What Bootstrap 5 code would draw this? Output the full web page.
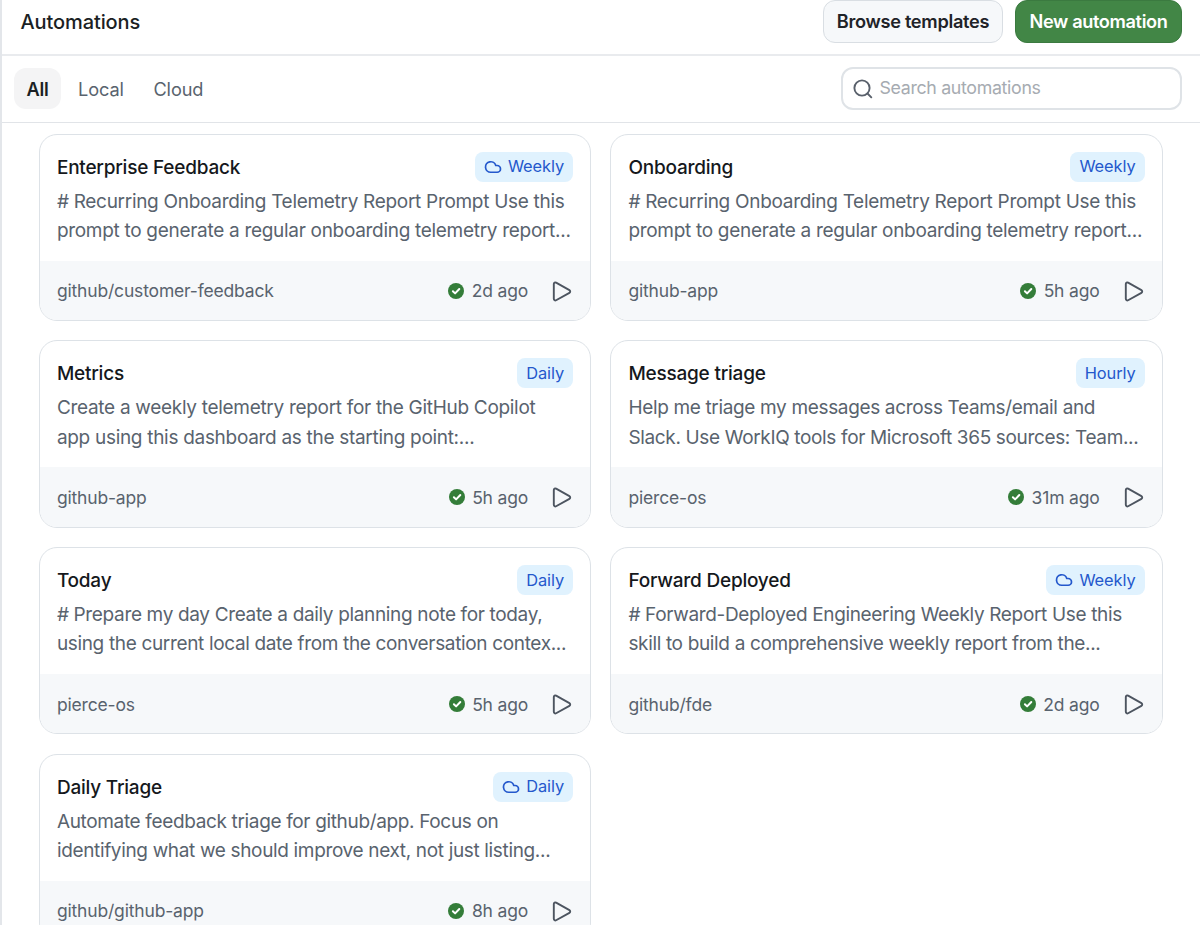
<!DOCTYPE html>
<html lang="en">
<head>
<meta charset="utf-8">
<meta name="viewport" content="width=device-width, initial-scale=1">
<title>Automations</title>
<link href="https://cdn.jsdelivr.net/npm/bootstrap@5.3.0/dist/css/bootstrap.min.css" rel="stylesheet">
<style>
  body { font-family: Inter, "Liberation Sans", sans-serif; font-size: 19px; color: #1b1f24; background: #fff; }
  .app-shell { height: 925px; border-left: 2px solid #e3e6ea; overflow: hidden; }
  .top-bar { height: 56px; padding: 0 18px 11px 18.5px; border-bottom: 2px solid #e9ebee; }
  .top-bar h1 { font-size: 20px; font-weight: 500; letter-spacing: -.1px; line-height: 30px; }
  .top-bar .btn { height: 43px; padding: 0; font-size: 18.2px; font-weight: 600; border-radius: 12px; letter-spacing: -.3px; line-height: 39px; white-space: nowrap; }
  .top-bar .btn-browse { width: 180px; background: #f6f8fa; border: 1.5px solid #d9dee3; color: #1f2328; }
  .top-bar .btn-create { width: 167px; margin-left: 12px; background: #428646; border: 1px solid #3b7a40; color: #fff; letter-spacing: -.37px; }
  .filter-bar { height: 67px; padding: 0 18px 1px 12px; border-bottom: 1px solid #e1e4e8; }
  .filter-bar .nav { gap: 4px; }
  .filter-bar .nav-link { height: 41px; padding: 0 12.8px; line-height: 42px; color: #59636e; border-radius: 12px; font-size: 18.2px; letter-spacing: -.1px; }
  .filter-bar .nav-link.active { padding: 0 12.5px; background: #f4f4f5; color: #1b1f24; font-weight: 600; letter-spacing: -.2px; }
  .search-box { width: 341px; height: 43px; border: 2px solid #dfe3e7; border-radius: 12px; padding-left: 9.5px; gap: 7px; color: #59606b; }
  .search-box input { font-size: 17.8px; letter-spacing: -.33px; outline: 0; }
  .search-box input::placeholder { color: #a6abb1; opacity: 1; }
  .card-grid { display: grid; grid-template-columns: 552.5px 552.5px; gap: 19.2px 19px; padding: 10.5px 0 0 36.6px; }
  .task-card { height: 187.5px; border: 1.5px solid #dde2e7; border-radius: 18px; overflow: hidden; }
  .task-card .card-body { padding: 17px 17px 0 17.3px; }
  .task-title { font-size: 19px; font-weight: 500; line-height: 32px; height: 30px; letter-spacing: -.22px; color: #15181c; }
  .task-tag { height: 30px; border-radius: 8px; background: #e0f2fe; color: #2458cc; font-size: 16.4px; letter-spacing: -.08px; padding: 0 9px; gap: 6px; }
  .task-text { font-size: 19px; line-height: 29.4px; letter-spacing: -.3px; color: #59636e; white-space: nowrap; margin: 5px 0 0; }
  .task-text.snug { letter-spacing: -.345px; }
  .task-card .card-footer { height: 59.5px; background: #f6f8fa; border: 0; padding: 2px 17.5px 0 17.3px; color: #59636e; font-size: 17.5px; letter-spacing: -.17px; }
  .i-ok { color: #347d39; margin-right: 7.5px; margin-top: -1px; }
  .run-btn { border: 0; background: none; padding: 0; margin-left: 24px; color: #4d5560; width: 20.5px; height: 22px; display: flex; align-items: center; }
</style>
</head>
<body>
<svg width="0" height="0" class="d-none">
  <symbol id="i-cloud" viewBox="0 0 24 24"><path d="M17.5 19H9a7 7 0 1 1 6.71-9h1.79a4.5 4.5 0 1 1 0 9Z" fill="none" stroke="currentColor" stroke-width="2.3" stroke-linejoin="round"/></symbol>
  <symbol id="i-check" viewBox="0 0 16 16"><circle cx="8" cy="8" r="8" fill="currentColor"/><path d="M4.9 8.2l2.2 2.2 4.2-4.4" fill="none" stroke="#fff" stroke-width="2" stroke-linecap="round" stroke-linejoin="round"/></symbol>
  <symbol id="i-play" viewBox="0 0 21 22"><path d="M1.9 3.2c0-1.3 1.3-2.1 2.4-1.5l14 7.8c1.1.6 1.1 2.3 0 2.9l-14 7.8c-1.1.6-2.4-.2-2.4-1.5z" fill="none" stroke="currentColor" stroke-width="2" stroke-linejoin="round"/></symbol>
</svg>
<div class="app-shell">
  <header class="top-bar d-flex align-items-center">
    <h1 class="m-0 me-auto">Automations</h1>
    <button type="button" class="btn btn-browse">Browse templates</button>
    <button type="button" class="btn btn-create">New automation</button>
  </header>
  <div class="filter-bar d-flex align-items-center">
    <nav class="nav me-auto">
      <a class="nav-link active" href="#">All</a>
      <a class="nav-link" href="#">Local</a>
      <a class="nav-link" href="#">Cloud</a>
    </nav>
    <label class="search-box d-flex align-items-center">
      <svg width="20" height="20" viewBox="0 0 20 20" fill="none" stroke="currentColor" stroke-width="1.9" stroke-linecap="round"><circle cx="9" cy="9" r="7.6"/><path d="M14.5 14.5l3.8 3.8"/></svg>
      <input type="text" class="border-0 p-0 bg-transparent flex-grow-1" placeholder="Search automations">
    </label>
  </div>
  <main class="card-grid">
    <article class="card task-card">
      <div class="card-body">
        <div class="d-flex justify-content-between"><h2 class="task-title m-0">Enterprise Feedback</h2><span class="task-tag d-flex align-items-center"><svg width="18" height="18"><use href="#i-cloud"/></svg>Weekly</span></div>
        <p class="task-text"># Recurring Onboarding Telemetry Report Prompt Use this<br>prompt to generate a regular onboarding telemetry report...</p>
      </div>
      <div class="card-footer d-flex align-items-center"><span class="me-auto">github/customer-feedback</span><svg class="i-ok" width="16" height="16"><use href="#i-check"/></svg><span>2d ago</span><button class="run-btn" aria-label="Run"><svg width="20" height="21"><use href="#i-play"/></svg></button></div>
    </article>
    <article class="card task-card">
      <div class="card-body">
        <div class="d-flex justify-content-between"><h2 class="task-title m-0">Onboarding</h2><span class="task-tag d-flex align-items-center">Weekly</span></div>
        <p class="task-text"># Recurring Onboarding Telemetry Report Prompt Use this<br>prompt to generate a regular onboarding telemetry report...</p>
      </div>
      <div class="card-footer d-flex align-items-center"><span class="me-auto">github-app</span><svg class="i-ok" width="16" height="16"><use href="#i-check"/></svg><span>5h ago</span><button class="run-btn" aria-label="Run"><svg width="20" height="21"><use href="#i-play"/></svg></button></div>
    </article>
    <article class="card task-card">
      <div class="card-body">
        <div class="d-flex justify-content-between"><h2 class="task-title m-0">Metrics</h2><span class="task-tag d-flex align-items-center">Daily</span></div>
        <p class="task-text">Create a weekly telemetry report for the GitHub Copilot<br>app using this dashboard as the starting point:...</p>
      </div>
      <div class="card-footer d-flex align-items-center"><span class="me-auto">github-app</span><svg class="i-ok" width="16" height="16"><use href="#i-check"/></svg><span>5h ago</span><button class="run-btn" aria-label="Run"><svg width="20" height="21"><use href="#i-play"/></svg></button></div>
    </article>
    <article class="card task-card">
      <div class="card-body">
        <div class="d-flex justify-content-between"><h2 class="task-title m-0">Message triage</h2><span class="task-tag d-flex align-items-center">Hourly</span></div>
        <p class="task-text snug">Help me triage my messages across Teams/email and<br>Slack. Use WorkIQ tools for Microsoft 365 sources: Team...</p>
      </div>
      <div class="card-footer d-flex align-items-center"><span class="me-auto">pierce-os</span><svg class="i-ok" width="16" height="16"><use href="#i-check"/></svg><span>31m ago</span><button class="run-btn" aria-label="Run"><svg width="20" height="21"><use href="#i-play"/></svg></button></div>
    </article>
    <article class="card task-card">
      <div class="card-body">
        <div class="d-flex justify-content-between"><h2 class="task-title m-0">Today</h2><span class="task-tag d-flex align-items-center">Daily</span></div>
        <p class="task-text snug"># Prepare my day Create a daily planning note for today,<br>using the current local date from the conversation contex...</p>
      </div>
      <div class="card-footer d-flex align-items-center"><span class="me-auto">pierce-os</span><svg class="i-ok" width="16" height="16"><use href="#i-check"/></svg><span>5h ago</span><button class="run-btn" aria-label="Run"><svg width="20" height="21"><use href="#i-play"/></svg></button></div>
    </article>
    <article class="card task-card">
      <div class="card-body">
        <div class="d-flex justify-content-between"><h2 class="task-title m-0">Forward Deployed</h2><span class="task-tag d-flex align-items-center"><svg width="18" height="18"><use href="#i-cloud"/></svg>Weekly</span></div>
        <p class="task-text snug"># Forward-Deployed Engineering Weekly Report Use this<br>skill to build a comprehensive weekly report from the...</p>
      </div>
      <div class="card-footer d-flex align-items-center"><span class="me-auto">github/fde</span><svg class="i-ok" width="16" height="16"><use href="#i-check"/></svg><span>2d ago</span><button class="run-btn" aria-label="Run"><svg width="20" height="21"><use href="#i-play"/></svg></button></div>
    </article>
    <article class="card task-card">
      <div class="card-body">
        <div class="d-flex justify-content-between"><h2 class="task-title m-0">Daily Triage</h2><span class="task-tag d-flex align-items-center"><svg width="18" height="18"><use href="#i-cloud"/></svg>Daily</span></div>
        <p class="task-text snug">Automate feedback triage for github/app. Focus on<br>identifying what we should improve next, not just listing...</p>
      </div>
      <div class="card-footer d-flex align-items-center"><span class="me-auto">github/github-app</span><svg class="i-ok" width="16" height="16"><use href="#i-check"/></svg><span>8h ago</span><button class="run-btn" aria-label="Run"><svg width="20" height="21"><use href="#i-play"/></svg></button></div>
    </article>
  </main>
</div>
<script src="https://cdn.jsdelivr.net/npm/bootstrap@5.3.0/dist/js/bootstrap.bundle.min.js"></script>
</body>
</html>
